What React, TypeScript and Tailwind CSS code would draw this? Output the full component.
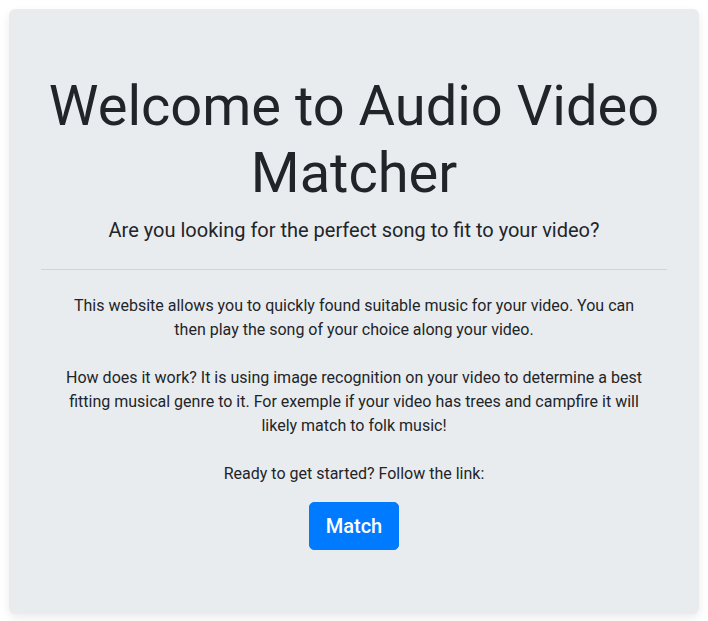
export default function App() {
  return (
    <div className="min-h-screen bg-white p-[9px] font-['Roboto',sans-serif] text-[#212529]">
      <div className="rounded-md bg-[#e9ecef] px-8 pt-16 pb-16 text-center shadow-[0_4px_10px_rgba(0,0,0,0.08)]">
        <h1 className="mb-2 text-[56px] leading-[1.2] font-normal">
          Welcome to Audio Video
          <br />
          Matcher
        </h1>
        <p className="text-[20px] leading-[30px] font-normal">
          Are you looking for the perfect song to fit to your video?
        </p>
        <hr className="my-6 border-t border-black/10" />
        <p className="text-base leading-6">
          This website allows you to quickly found suitable music for your video. You can
          <br />
          then play the song of your choice along your video.
          <br />
          <br />
          How does it work? It is using image recognition on your video to determine a best
          <br />
          fitting musical genre to it. For exemple if your video has trees and campfire it will
          <br />
          likely match to folk music!
          <br />
          <br />
          Ready to get started? Follow the link:
        </p>
        <button className="mt-4 rounded-[5px] border border-[#007bff] bg-[#007bff] px-4 py-2 text-[20px] leading-[30px] font-medium text-white">
          Match
        </button>
      </div>
    </div>
  );
}
